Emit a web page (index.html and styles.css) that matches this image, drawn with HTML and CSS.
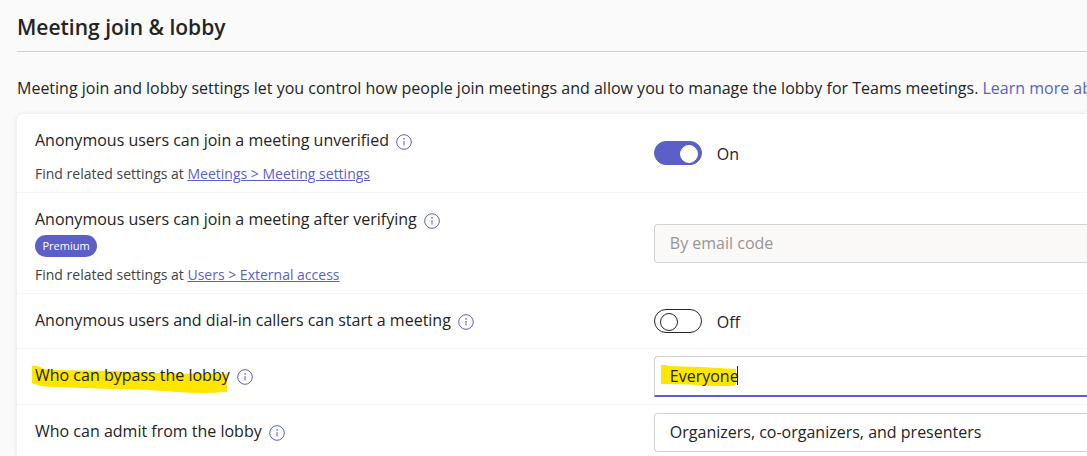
FILE: index.html
```html
<!DOCTYPE html>
<html lang="en">
<head>
	<meta charset="UTF-8">
	<title>Meeting join &amp; lobby</title>
	<link rel="stylesheet" href="styles.css">
</head>
<body>
	<svg class="sprite" aria-hidden="true">
		<symbol id="info" viewBox="0 0 16 16">
			<circle cx="8" cy="8" r="7.3" fill="none" stroke="currentColor"/>
			<path d="M8 7v4.5" fill="none" stroke="currentColor"/>
			<circle cx="8" cy="4.9" r=".8" fill="currentColor"/>
		</symbol>
	</svg>
	<main class="page">
		<h1 class="title">Meeting join &amp; lobby</h1>
		<p class="intro">Meeting join and lobby settings let you control how people join meetings and allow you to manage the lobby for Teams meetings. <a class="more" href="#">Learn more about</a></p>
		<section class="card">
			<div class="row">
				<div class="text">
					<div class="name">
						<label for="unverified">Anonymous users can join a meeting unverified</label>
						<svg class="info"><use href="#info"/></svg>
					</div>
					<p class="related">Find related settings at <a href="#">Meetings &gt; Meeting settings</a></p>
				</div>
				<div class="control">
					<input class="toggle" id="unverified" type="checkbox" checked>
					<span class="state">On</span>
				</div>
			</div>
			<div class="row">
				<div class="text">
					<div class="name">
						<label for="verifying">Anonymous users can join a meeting after verifying</label>
						<svg class="info"><use href="#info"/></svg>
					</div>
					<span class="badge">Premium</span>
					<p class="related">Find related settings at <a href="#">Users &gt; External access</a></p>
				</div>
				<div class="control">
					<input class="field" id="verifying" type="text" value="By email code" disabled>
				</div>
			</div>
			<div class="row">
				<div class="text">
					<div class="name">
						<label for="dialin">Anonymous users and dial-in callers can start a meeting</label>
						<svg class="info"><use href="#info"/></svg>
					</div>
				</div>
				<div class="control">
					<input class="toggle" id="dialin" type="checkbox">
					<span class="state">Off</span>
				</div>
			</div>
			<div class="row">
				<div class="text">
					<div class="name">
						<svg class="marker marker-name" viewBox="0 0 196 29"><path d="M0 1Q5 0 8 2Q12 5 21 5L84 6Q104 7 124 8Q160 9 195 9V27Q172 29 145 27Q110 24 80 24L22 22Q8 22 0 18Z"/></svg>
						<label for="bypass">Who can bypass the lobby</label>
						<svg class="info"><use href="#info"/></svg>
					</div>
				</div>
				<div class="control">
					<svg class="marker marker-field" viewBox="0 0 78 22"><path d="M0 0H6V1L40 2L75 4V19L73 21Q45 21 36 20Q20 19 0 19Z"/><rect class="caret" x="76" y="1" width="1" height="19"/></svg>
					<input class="field active" id="bypass" type="text" value="Everyone">
				</div>
			</div>
			<div class="row">
				<div class="text">
					<div class="name">
						<label for="admit">Who can admit from the lobby</label>
						<svg class="info"><use href="#info"/></svg>
					</div>
				</div>
				<div class="control">
					<input class="field" id="admit" type="text" value="Organizers, co-organizers, and presenters">
				</div>
			</div>
		</section>
	</main>
</body>
</html>
```

FILE: styles.css
```css
*{box-sizing:border-box;}
body{margin:0;background:#fafafa;color:#242424;font:16px/24px "Open Sans","Noto Sans",sans-serif;overflow:hidden;}
h1,p{margin:0;}
a{color:#5b5fc7;}
.sprite{display:none;}
.page{padding:12px 0 0 17px;}
.title{height:40px;border-bottom:1px solid #d1d1d1;font-size:21px;line-height:30px;font-weight:600;}
.intro{margin:24px 0 14px;white-space:nowrap;overflow:hidden;}
.more{text-decoration:none;}
.card{background:#fff;border-radius:6px 0 0 6px;box-shadow:0 0 5px rgba(0,0,0,.1);}
.row{display:grid;grid-template-columns:10fr 7fr;align-items:center;padding:7px 0 7px 18px;border-bottom:1px solid #f5f5f5;min-height:55px;}
.text{align-self:start;padding:7px 0 1px;}
.name{display:flex;align-items:center;gap:7px;position:relative;}
.name label{position:relative;}
.info{width:16px;height:16px;margin-top:4px;color:#5b5fc7;}
.related{font-size:14px;line-height:20px;margin-top:12px;color:#424242;}
.badge{display:block;width:62px;height:22px;margin-top:4px;border-radius:11px;background:#5b5fc7;color:#fff;font-size:11px;line-height:22px;text-align:center;}
.badge + .related{margin-top:8px;}
.control{display:flex;align-items:center;position:relative;}
.toggle{appearance:none;width:48px;height:24px;margin:0;padding:3px 5px;border:1px solid #242424;border-radius:12px;display:flex;}
.toggle::before{content:"";width:16px;height:16px;border:1px solid #242424;border-radius:50%;}
.toggle:checked{background:#5b5fc7;border-color:#5b5fc7;padding:3px;justify-content:flex-end;}
.toggle:checked::before{background:#fff;border-color:#fff;}
.state{margin-left:15px;padding-top:2px;}
.field{width:100%;height:39px;padding:0 15px;border:1px solid #d1d1d1;border-right:0;border-radius:4px 0 0 4px;background:transparent;color:#242424;font:inherit;position:relative;outline:0;}
.field:disabled{background:#faf9f8;color:#979593;}
.active{height:41px;border-bottom:2px solid #5b5fc7;border-bottom-left-radius:0;}
/* highlighter strokes */
.marker{position:absolute;fill:#ffe600;}
.marker-name{left:-3px;top:2px;width:196px;height:29px;}
.marker-field{left:7px;top:9px;width:78px;height:22px;}
.caret{fill:#242424;}
```
